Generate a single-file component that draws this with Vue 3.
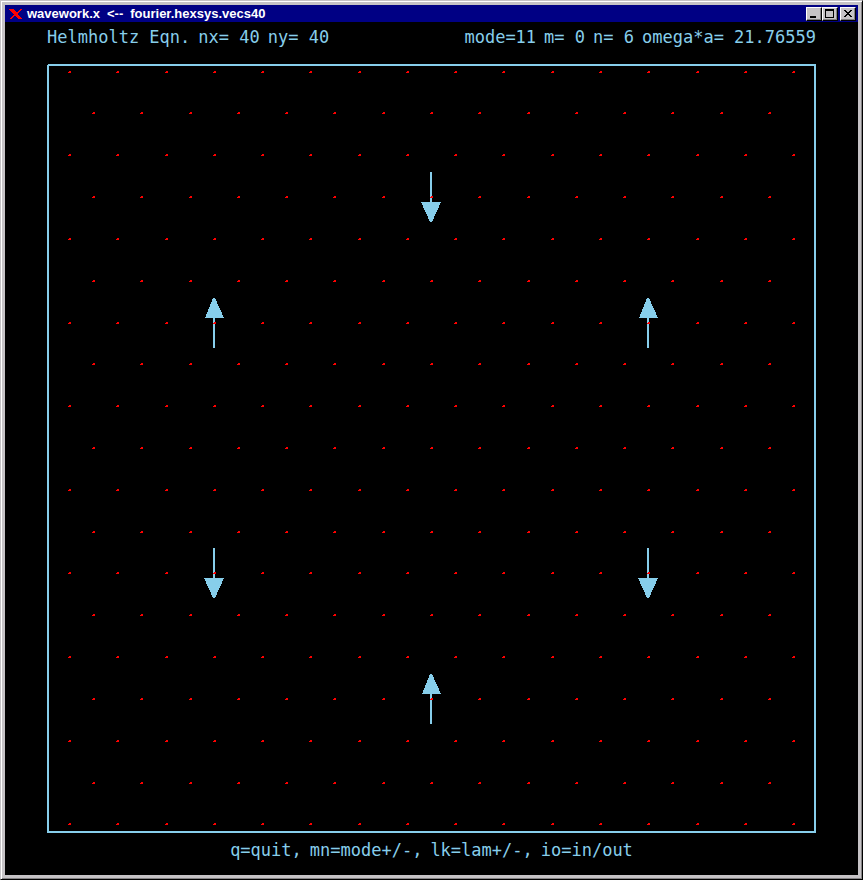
<script setup>
const columns = 16
const stepX = 48.27
const rowTops = [7, 48, 90, 132, 174, 216, 258, 299, 341, 383, 425, 467, 508, 550, 592, 634, 676, 718, 759]

const dots = []
rowTops.forEach((y, r) => {
  const odd = r % 2
  for (let c = 0; c < columns - odd; c++) {
    dots.push({ x: Math.round(21 + stepX * (c + odd / 2)), y })
  }
})

const arrows = [
  { x: 384, y: 133, dir: 'down' },
  { x: 167, y: 259, dir: 'up' },
  { x: 601, y: 259, dir: 'up' },
  { x: 167, y: 509, dir: 'down' },
  { x: 601, y: 509, dir: 'down' },
  { x: 384, y: 635, dir: 'up' },
]

const shapes = {
  up: 'M-1 -25H1L10 -5H1V25H-1V-5H-9Z',
  down: 'M-1 -25H1V5H10L1 25H-1L-10 5H-1Z',
}
const dotPath = dots.map((d) => `M${d.x + 1} ${d.y}h2v2h-3v-1h1z`).join('')

const titleParts = ['wavework.x', '<--', 'fourier.hexsys.vecs40']
const grid = ['Helmholtz Eqn.', 'nx= 40', 'ny= 40']
const mode = ['mode=11', 'm= 0', 'n= 6', 'omega*a= 21.76559']
const keys = ['q=quit,', 'mn=mode+/-,', 'lk=lam+/-,', 'io=in/out']
</script>

<template>
  <main class="window">
    <header class="titlebar">
      <svg class="logo" viewBox="0 0 14 10" aria-hidden="true">
        <path d="M0 0h5l8 10h-4z" />
        <path d="M12 0h2L2 10H0z" />
      </svg>
      <h1 class="title">
        <span v-for="part in titleParts" :key="part">{{ part }}</span>
      </h1>
      <div class="controls">
        <button class="control" type="button" aria-label="Minimize">
          <svg viewBox="0 0 12 10"><path d="M2 7h6v2H2z" /></svg>
        </button>
        <button class="control" type="button" aria-label="Maximize">
          <svg viewBox="0 0 12 10"><path fill-rule="evenodd" d="M1 0h9v9H1zM2 2v6h7V2z" /></svg>
        </button>
        <button class="control close" type="button" aria-label="Close">
          <svg viewBox="0 0 12 10"><path d="M2 1h2v1h1v1h2v-1h1v-1h2v1h-1v1h-1v1h-1v1h1v1h1v1h1v1h-2v-1h-1v-1h-2v1h-1v1h-2v-1h1v-1h1v-1h1v-1h-1v-1h-1v-1h-1z" /></svg>
        </button>
      </div>
    </header>
    <section class="screen">
      <div class="status">
        <p class="line"><span v-for="field in grid" :key="field">{{ field }}</span></p>
        <p class="line"><span v-for="field in mode" :key="field">{{ field }}</span></p>
      </div>
      <svg class="plot" viewBox="0 0 769 769" role="img" aria-label="Vector field">
        <path class="frame" fill-rule="evenodd" d="M1 0H769V769H0V1H1zM2 2V767H767V2z" />
        <path v-for="(a, i) in arrows" :key="i" class="arrow" :d="shapes[a.dir]" :transform="`translate(${a.x} ${a.y})`" />
        <path class="dots" :d="dotPath" />
      </svg>
      <p class="line help"><span v-for="key in keys" :key="key">{{ key }}</span></p>
    </section>
  </main>
</template>

<style>
body {
  margin: 0;
  background: #000;
}
</style>

<style scoped>
.window {
  box-sizing: border-box;
  min-height: 100vh;
  display: flex;
  flex-direction: column;
  padding: 4px;
  border: 1px solid;
  border-color: #c6c3c6 #000 #000 #c6c3c6;
  background: #c6c3c6;
  box-shadow: inset 1px 1px #fff, inset -1px -1px #848284;
}
.titlebar {
  box-sizing: border-box;
  display: flex;
  align-items: center;
  height: 17px;
  padding: 1px 2px 0 4px;
  background: #000084;
}
.logo {
  width: 14px;
  height: 10px;
  fill: #f00;
  shape-rendering: crispEdges;
}
.title {
  display: flex;
  gap: 7px;
  margin: 0 0 0 4px;
  flex: 1;
  color: #fff;
  font: bold 13px/16px "Liberation Sans", Arial, sans-serif;
  white-space: nowrap;
}
.controls {
  display: flex;
}
.control {
  box-sizing: border-box;
  width: 16px;
  height: 14px;
  padding: 1px;
  border: 1px solid;
  border-color: #fff #000 #000 #fff;
  background: #c6c3c6;
  box-shadow: inset -1px -1px #848284;
}
.control svg {
  display: block;
  width: 12px;
  height: 10px;
  shape-rendering: crispEdges;
}
.close {
  margin-left: 2px;
}
.screen {
  flex: 1;
  padding: 5px 42px 0;
  background: #000;
  color: #87ceeb;
}
.status {
  display: flex;
  justify-content: space-between;
  margin-bottom: 17px;
}
.line {
  display: flex;
  gap: 8px;
  margin: 0;
  font: 17px/20px "DejaVu Sans Mono", "Liberation Mono", monospace;
  white-space: pre;
}
.plot {
  display: block;
  width: 100%;
  shape-rendering: crispEdges;
}
.frame,
.arrow {
  fill: #87ceeb;
}
.dots {
  fill: #f00;
}
.help {
  justify-content: center;
  margin-top: 7px;
}
</style>
